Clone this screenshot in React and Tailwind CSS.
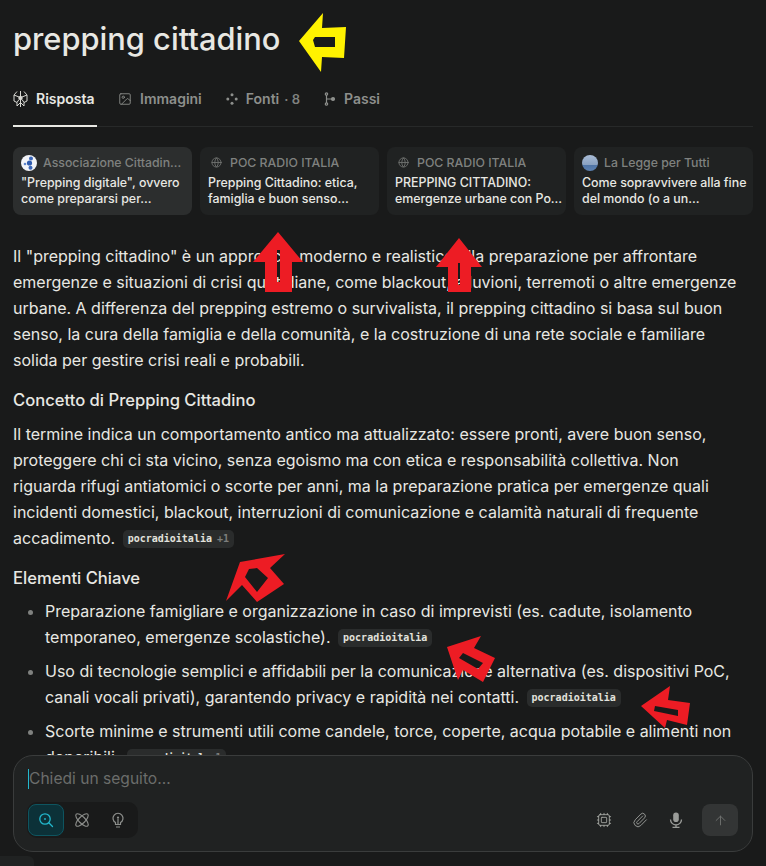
import { Image, Cpu, Paperclip, ArrowUp, Globe } from 'lucide-react';

const body = "font-['Inter',sans-serif]";

const sources = [
    { site: 'Associazione Cittadin…', title: '"Prepping digitale", ovvero come prepararsi per…', icon: 'assoc', active: true },
    { site: 'POC RADIO ITALIA', title: 'Prepping Cittadino: etica, famiglia e buon senso…', icon: 'globe' },
    { site: 'POC RADIO ITALIA', title: 'PREPPING CITTADINO: emergenze urbane con Po…', icon: 'globe' },
    { site: 'La Legge per Tutti', title: 'Come sopravvivere alla fine del mondo (o a un…', icon: 'legge' },
];

const Badge = ({ label = 'pocradioitalia', extra }) => (
    <span className="ml-[3px] inline-flex h-[18px] items-center rounded-[5px] bg-[#2a2c2c] px-[5px] align-[2px] font-['DejaVu_Sans_Mono',monospace] text-[10px] font-bold text-[#e2e2dc]">
        {label}
        {extra && <span className="ml-[5px] text-[#7c7e7c]">{extra}</span>}
    </span>
);

const SourceIcon = ({ type }) => {
    if (type === 'assoc') {
        return (
            <svg width="16" height="16" viewBox="0 0 16 16" className="shrink-0">
                <circle cx="8" cy="8" r="8" fill="#f2f4f8" />
                <circle cx="8.5" cy="8" r="2.6" fill="#2f5cb0" />
                <circle cx="10" cy="3.5" r="2" fill="#3a66b8" />
                <circle cx="9.5" cy="12.8" r="2" fill="#3a66b8" />
                <circle cx="4" cy="9" r="1.3" fill="#5f86cc" />
            </svg>
        );
    }
    if (type === 'legge') {
        return (
            <svg width="16" height="16" viewBox="0 0 16 16" className="shrink-0">
                <defs>
                    <linearGradient id="legge" x1="0" y1="0" x2="0" y2="1">
                        <stop offset="0" stopColor="#a9bcd6" />
                        <stop offset="0.6" stopColor="#8aa2c2" />
                        <stop offset="0.62" stopColor="#4f74a6" />
                        <stop offset="1" stopColor="#5d82b2" />
                    </linearGradient>
                </defs>
                <circle cx="8" cy="8" r="8" fill="url(#legge)" />
            </svg>
        );
    }
    return (
        <span className="flex w-4 shrink-0 justify-center">
            <Globe size={11} className="text-[#6f716f]" />
        </span>
    );
};

const SourceCard = ({ site, title, icon, active }) => (
    <div className={`flex h-[68px] flex-col rounded-lg px-2 pt-2 ${active ? 'bg-[#2c2e2e]' : 'bg-[#202222]'}`}>
        <div className="flex h-[15px] items-center gap-[6px]">
            <SourceIcon type={icon} />
            <span className="truncate text-[12.3px] font-medium leading-4 text-[#7f817f]">{site}</span>
        </div>
        <p className="mt-[5px] -mr-[6px] text-[12.4px] font-medium leading-4 text-[#e8e8e3]">{title}</p>
    </div>
);

const Tab = ({ icon, label, active, children }) => (
    <div className={`flex items-center gap-2 text-sm font-semibold ${active ? 'text-[#e8e8e3]' : 'text-[#8d8f8c]'}`}>
        {icon}
        <span>{label}</span>
        {children}
    </div>
);

const AnswerIcon = () => (
    <svg width="15" height="16" viewBox="0 0 15 16" fill="none" stroke="#d8d8d3" strokeWidth="1">
        <path d="M7.5 0v16M4 0.5L1 4v6l3 1.5V15l3.5-3.5L11 15v-3.5L14 10V4L11 0.5" />
        <path d="M1 4l5 2M14 4L9 6M4 11.5l2-3M11 11.5l-2-3" />
        <circle cx="7.5" cy="7" r="1.7" fill="#d8d8d3" />
    </svg>
);

const SourcesIcon = () => (
    <svg width="12" height="12" viewBox="0 0 12 12" fill="#8d8f8c">
        <circle cx="6" cy="1.8" r="1.5" />
        <circle cx="1.8" cy="6" r="1.5" />
        <circle cx="10.2" cy="6" r="1.5" />
        <circle cx="6" cy="10.2" r="1.5" />
    </svg>
);

const StepsIcon = () => (
    <svg width="12" height="14" viewBox="0 0 12 14" fill="none" stroke="#8d8f8c" strokeWidth="1.2">
        <path d="M2.5 3v8M2.5 7h5" />
        <circle cx="2.5" cy="2" r="1.2" />
        <circle cx="2.5" cy="12" r="1.2" />
        <circle cx="9" cy="7" r="1.5" fill="#8d8f8c" />
    </svg>
);

const ModeSearch = () => (
    <svg width="16" height="16" viewBox="0 0 16 16" fill="none" stroke="#22b8cd" strokeWidth="1.3" strokeLinecap="round">
        <circle cx="7" cy="7" r="5.2" />
        <circle cx="7" cy="7" r="0.9" fill="#22b8cd" stroke="none" />
        <path d="M10.8 10.8L14.5 14.5" />
    </svg>
);

const ModeAtom = () => (
    <svg width="16" height="16" viewBox="0 0 16 16" fill="none" stroke="#8d8f8c" strokeWidth="1.1">
        <ellipse cx="8" cy="8" rx="8.2" ry="3.2" transform="rotate(45 8 8)" />
        <ellipse cx="8" cy="8" rx="8.2" ry="3.2" transform="rotate(-45 8 8)" />
    </svg>
);

const ModeBulb = () => (
    <svg width="12" height="16" viewBox="0 0 12 16" fill="none" stroke="#8d8f8c" strokeWidth="1.2">
        <path d="M3.5 10.6A5 5 0 1 1 8.5 10.6V12.5H3.5Z" />
        <circle cx="6" cy="5.5" r="1.1" fill="#8d8f8c" stroke="none" />
        <path d="M6 6.5V12.5M4 15h4" />
    </svg>
);

const MicIcon = () => (
    <svg width="14" height="16" viewBox="0 0 14 16" fill="none" stroke="#9a9c99" strokeWidth="1.3">
        <rect x="4.2" y="0.5" width="5.6" height="9.5" rx="2.8" fill="#9a9c99" stroke="none" />
        <path d="M1.5 7.5a5.5 5.5 0 0 0 11 0M7 13v2M3.5 15.3h7" />
    </svg>
);

// annotation arrows painted over the screenshot
const Arrows = () => (
    <svg className="pointer-events-none absolute inset-0" width="766" height="866" viewBox="0 0 766 866">
        <path fillRule="evenodd" fill="#fff200" d="M299 41L323 13L322 28L346 27L344 58L322 57L321 72ZM313 40L315 37H335V47H315Z" />
        <path fillRule="evenodd" fill="#ed1c24" d="M278 232L303 262H292V292H265V262H253ZM277 250H280V282H277Z" />
        <path fillRule="evenodd" fill="#ed1c24" d="M459 238L482 267H471V292H448V267H436ZM458 263H460V285H458Z" />
        <path fillRule="evenodd" fill="#ed1c24" d="M226 601L240 562L285 554L270 568L284 584L257 602L242 585ZM245 577L249 569L257 568L268 578L257 592Z" />
        <path fillRule="evenodd" fill="#ed1c24" d="M447 647L481 636L474 648L495 658L483 682L463 670L458 680ZM459 658L463 653L483 663L478 669Z" />
        <path fillRule="evenodd" fill="#ed1c24" d="M641 706L670 686L668 700L690 703L687 725L667 720L665 728ZM655 706L678 710V716L654 711Z" />
    </svg>
);

export default function App() {
    return (
        <div className={`relative h-[866px] w-[766px] overflow-hidden bg-[#191a1a] text-[#e8e8e3] ${body}`}>
            <div className="px-[13px]">
                <h1 className="pt-[18px] text-[30.8px] font-medium leading-[42px] text-[#e8e8e3]">prepping cittadino</h1>

                <div className="mt-[8px] flex h-[59px] items-start gap-6 border-b border-[#272929] pt-[20px]">
                    <div className="-mb-[1px] h-[39px] w-[84px] border-b-2 border-[#e8e8e3] pt-[1px]">
                        <Tab icon={<AnswerIcon />} label="Risposta" active />
                    </div>
                    <div className="-ml-[3px] pt-[1px]">
                        <Tab icon={<Image size={14} strokeWidth={1.5} />} label="Immagini" />
                    </div>
                    <div className="pt-[1px]">
                        <Tab icon={<SourcesIcon />} label="Fonti">
                            <span className="-ml-[3px] text-[13px] text-[#7f817f]">· 8</span>
                        </Tab>
                    </div>
                    <div className="pt-[1px]">
                        <Tab icon={<StepsIcon />} label="Passi" />
                    </div>
                </div>

                <div className="mt-[20px] grid grid-cols-4 gap-2">
                    {sources.map((s, i) => (
                        <SourceCard key={i} {...s} />
                    ))}
                </div>

                <div className="mt-[28px] pr-[12px] text-base leading-[26px] text-[#e8e8e3]">
                    <p>
                        Il "prepping cittadino" è un approccio moderno e realistico alla preparazione per affrontare emergenze e situazioni di crisi quotidiane, come blackout, alluvioni, terremoti o altre emergenze urbane. A differenza del prepping estremo o survivalista, il prepping cittadino si basa sul buon senso, la cura della famiglia e della comunità, e la costruzione di una rete sociale e familiare solida per gestire crisi reali e probabili.
                    </p>
                    <h2 className="mt-[14px] text-[16.6px] font-medium">Concetto di Prepping Cittadino</h2>
                    <p className="mt-2">
                        Il termine indica un comportamento antico ma attualizzato: essere pronti, avere buon senso, proteggere chi ci sta vicino, senza egoismo ma con etica e responsabilità collettiva. Non riguarda rifugi antiatomici o scorte per anni, ma la preparazione pratica per emergenze quali incidenti domestici, blackout, interruzioni di comunicazione e calamità naturali di frequente accadimento. <Badge extra="+1" />
                    </p>
                    <h2 className="mt-[14px] text-[16.6px] font-medium">Elementi Chiave</h2>
                    <ul className="mt-[7px] list-disc pl-8 marker:text-[#7f817f]">
                        <li>
                            Preparazione famigliare e organizzazione in caso di imprevisti (es. cadute, isolamento temporaneo, emergenze scolastiche). <Badge />
                        </li>
                        <li className="mt-2">
                            Uso di tecnologie semplici e affidabili per la comunicazione alternativa (es. dispositivi PoC, canali vocali privati), garantendo privacy e rapidità nei contatti. <Badge />
                        </li>
                        <li className="mt-2">
                            Scorte minime e strumenti utili come candele, torce, coperte, acqua potabile e alimenti non deperibili. <Badge label="pocradioital" extra="+1" />
                        </li>
                    </ul>
                </div>
            </div>

            <Arrows />

            <div className="absolute bottom-[14px] left-[13px] flex h-[97px] w-[740px] flex-col justify-between rounded-[20px] border border-[#3a3c3c] bg-[#202222] pt-[11px] pr-[14px] pb-[13px] pl-[13px]">
                <div className="ml-px flex items-center text-[15.6px] leading-6 text-[#6b6d6b]">
                    <span className="h-5 w-px bg-[#22b8cd]" />
                    Chiedi un seguito…
                </div>
                <div className="flex items-center justify-between">
                    <div className="flex h-9 w-[111px] items-center rounded-[10px] bg-[#191a1a] p-px">
                        <div className="flex h-8 w-9 items-center justify-center rounded-lg border border-[#0e5560] bg-[#0c3138]">
                            <ModeSearch />
                        </div>
                        <div className="flex h-8 w-9 items-center justify-center">
                            <ModeAtom />
                        </div>
                        <div className="flex h-8 w-9 items-center justify-center">
                            <ModeBulb />
                        </div>
                    </div>
                    <div className="flex items-center">
                        <div className="flex w-9 justify-center">
                            <Cpu size={16} strokeWidth={1.3} className="text-[#a8aaa6]" />
                        </div>
                        <div className="flex w-9 justify-center">
                            <Paperclip size={16} strokeWidth={1.4} className="text-[#9a9c99]" />
                        </div>
                        <div className="flex w-9 justify-center">
                            <MicIcon />
                        </div>
                        <div className="ml-2 flex h-8 w-9 items-center justify-center rounded-lg bg-[#333535]">
                            <ArrowUp size={15} strokeWidth={1.5} className="text-[#6f716f]" />
                        </div>
                    </div>
                </div>
            </div>

            <div className="absolute bottom-0 left-0 h-[10px] w-[34px] overflow-hidden rounded-tr-md bg-[#202222] pt-[8px] pl-[3px] font-['DejaVu_Sans_Mono',monospace] text-[10px] leading-[10px] text-[#c8c8c3]">
                ees
            </div>
        </div>
    );
}
